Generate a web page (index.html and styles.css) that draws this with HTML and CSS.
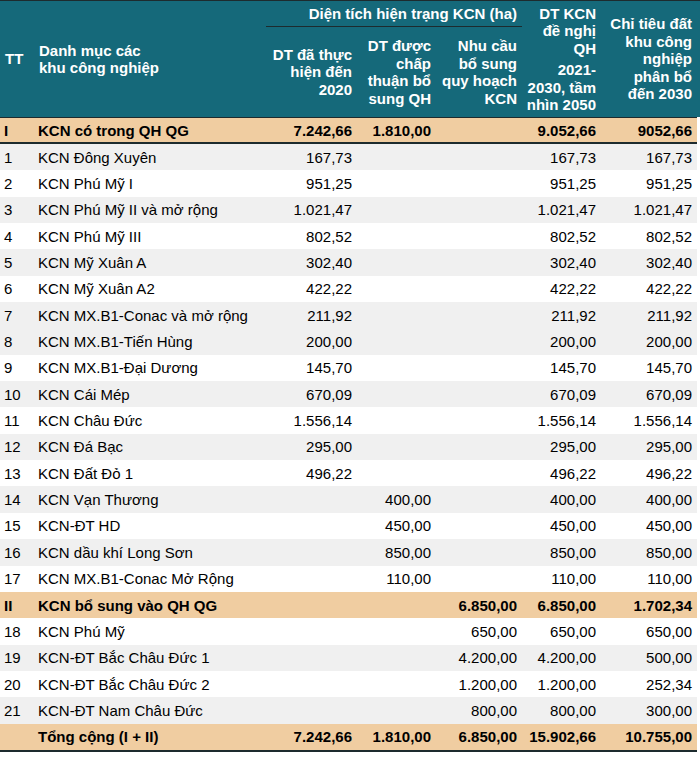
FILE: index.html
```html
<!DOCTYPE html>
<html lang="vi">
<head>
<meta charset="utf-8">
<title>Danh mục các khu công nghiệp</title>
<link rel="stylesheet" href="styles.css">
</head>
<body>
<div class="sheet">
<table class="kcn">
  <colgroup>
    <col class="c-tt"><col class="c-name"><col class="c-a"><col class="c-b"><col class="c-c"><col class="c-d"><col class="c-e">
  </colgroup>
  <thead>
    <tr class="h1">
      <th rowspan="2" class="left tt">TT</th>
      <th rowspan="2" class="left name">Danh mục các<br>khu công nghiệp</th>
      <th colspan="3" class="group">Diện tích hiện trạng KCN (ha)</th>
      <th rowspan="2" class="num"><div>DT KCN<br>đề nghị<br>QH</div><div class="gap">2021-<br>2030, tầm<br>nhìn 2050</div></th>
      <th rowspan="2" class="num">Chỉ tiêu đất<br>khu công<br>nghiệp<br>phân bổ<br>đến 2030</th>
    </tr>
    <tr class="h2">
      <th class="num">DT đã thực<br>hiện đến<br>2020</th>
      <th class="num">DT được<br>chấp<br>thuận bổ<br>sung QH</th>
      <th class="num">Nhu cầu<br>bổ sung<br>quy hoạch<br>KCN</th>
    </tr>
  </thead>
  <tbody>
    <tr class="sec first"><td>I</td><td>KCN có trong QH QG</td><td>7.242,66</td><td>1.810,00</td><td></td><td>9.052,66</td><td>9052,66</td></tr>
    <tr class="g"><td>1</td><td>KCN Đông Xuyên</td><td>167,73</td><td></td><td></td><td>167,73</td><td>167,73</td></tr>
    <tr><td>2</td><td>KCN Phú Mỹ I</td><td>951,25</td><td></td><td></td><td>951,25</td><td>951,25</td></tr>
    <tr class="g"><td>3</td><td>KCN Phú Mỹ II và mở rộng</td><td>1.021,47</td><td></td><td></td><td>1.021,47</td><td>1.021,47</td></tr>
    <tr><td>4</td><td>KCN Phú Mỹ III</td><td>802,52</td><td></td><td></td><td>802,52</td><td>802,52</td></tr>
    <tr class="g"><td>5</td><td>KCN Mỹ Xuân A</td><td>302,40</td><td></td><td></td><td>302,40</td><td>302,40</td></tr>
    <tr><td>6</td><td>KCN Mỹ Xuân A2</td><td>422,22</td><td></td><td></td><td>422,22</td><td>422,22</td></tr>
    <tr class="g"><td>7</td><td>KCN MX.B1-Conac và mở rộng</td><td>211,92</td><td></td><td></td><td>211,92</td><td>211,92</td></tr>
    <tr class="g"><td>8</td><td>KCN MX.B1-Tiến Hùng</td><td>200,00</td><td></td><td></td><td>200,00</td><td>200,00</td></tr>
    <tr><td>9</td><td>KCN MX.B1-Đại Dương</td><td>145,70</td><td></td><td></td><td>145,70</td><td>145,70</td></tr>
    <tr class="g"><td>10</td><td>KCN Cái Mép</td><td>670,09</td><td></td><td></td><td>670,09</td><td>670,09</td></tr>
    <tr><td>11</td><td>KCN Châu Đức</td><td>1.556,14</td><td></td><td></td><td>1.556,14</td><td>1.556,14</td></tr>
    <tr class="g"><td>12</td><td>KCN Đá Bạc</td><td>295,00</td><td></td><td></td><td>295,00</td><td>295,00</td></tr>
    <tr><td>13</td><td>KCN Đất Đỏ 1</td><td>496,22</td><td></td><td></td><td>496,22</td><td>496,22</td></tr>
    <tr class="g"><td>14</td><td>KCN Vạn Thương</td><td></td><td>400,00</td><td></td><td>400,00</td><td>400,00</td></tr>
    <tr><td>15</td><td>KCN-ĐT HD</td><td></td><td>450,00</td><td></td><td>450,00</td><td>450,00</td></tr>
    <tr class="g"><td>16</td><td>KCN dầu khí Long Sơn</td><td></td><td>850,00</td><td></td><td>850,00</td><td>850,00</td></tr>
    <tr><td>17</td><td>KCN MX.B1-Conac Mở Rộng</td><td></td><td>110,00</td><td></td><td>110,00</td><td>110,00</td></tr>
    <tr class="sec"><td>II</td><td>KCN bổ sung vào QH QG</td><td></td><td></td><td>6.850,00</td><td>6.850,00</td><td>1.702,34</td></tr>
    <tr><td>18</td><td>KCN Phú Mỹ</td><td></td><td></td><td>650,00</td><td>650,00</td><td>650,00</td></tr>
    <tr class="g"><td>19</td><td>KCN-ĐT Bắc Châu Đức 1</td><td></td><td></td><td>4.200,00</td><td>4.200,00</td><td>500,00</td></tr>
    <tr><td>20</td><td>KCN-ĐT Bắc Châu Đức 2</td><td></td><td></td><td>1.200,00</td><td>1.200,00</td><td>252,34</td></tr>
    <tr class="g"><td>21</td><td>KCN-ĐT Nam Châu Đức</td><td></td><td></td><td>800,00</td><td>800,00</td><td>300,00</td></tr>
    <tr class="sec total"><td></td><td>Tổng cộng (I + II)</td><td>7.242,66</td><td>1.810,00</td><td>6.850,00</td><td>15.902,66</td><td>10.755,00</td></tr>
  </tbody>
</table>
</div>
</body>
</html>
```

FILE: styles.css
```css
html, body {
  margin: 0;
  padding: 0;
  background: #fff;
}

.sheet {
  width: 700px;
  border-top: 1px solid #1d2b2e;
  background: linear-gradient(#15697a, #15697a) top left / 100% 116px no-repeat;
  font-family: "Liberation Sans", Arial, sans-serif;
  font-size: 15px;
  color: #000;
}

.kcn {
  width: 697px;
  table-layout: fixed;
  border-collapse: separate;
  border-spacing: 0;
}

.c-tt { width: 33px; }
.c-name { width: 233px; }
.c-a { width: 91px; }
.c-b { width: 79px; }
.c-c { width: 86px; }
.c-d { width: 79px; }
.c-e { width: 96px; }

/* header */
.kcn thead th {
  background: #15697a;
  color: #fff;
  font-weight: bold;
  line-height: 17.5px;
  padding: 0 5px 0 2px;
  vertical-align: middle;
}

.kcn thead .left { text-align: left; }
.kcn thead .tt { padding-left: 5px; }
.kcn thead .name { padding-left: 6px; }
.kcn thead .num { text-align: right; }

.kcn .h1 { height: 26px; }
.kcn .h2 { height: 90px; }

.kcn thead .group {
  text-align: right;
  border-bottom: 1px solid #1d2b2e;
  padding-top: 1px;
}

.kcn thead .gap { margin-top: 4px; }

/* body */
.kcn tbody tr { height: 26.35px; }

.kcn tbody td {
  padding: 0 5px 0 5px;
  line-height: 17px;
  white-space: nowrap;
  text-align: right;
  vertical-align: middle;
}

.kcn tbody td:first-child {
  text-align: left;
  padding-left: 4px;
  padding-right: 0;
}

.kcn tbody td:nth-child(2) {
  text-align: left;
  padding-left: 5px;
}

.kcn tbody tr.g td { background: #f0f0f0; }

.kcn tbody tr.sec td {
  background: #f0cda1;
  font-weight: bold;
}

.kcn tbody tr.first { height: 27px; }

.kcn tbody tr.first td {
  border-top: 1px solid #1d2b2e;
  border-bottom: 2px solid #1d2b2e;
}

.kcn tbody tr.total { height: 28px; }

.kcn tbody tr.total td {
  border-bottom: 2px solid #1d2b2e;
}
```
